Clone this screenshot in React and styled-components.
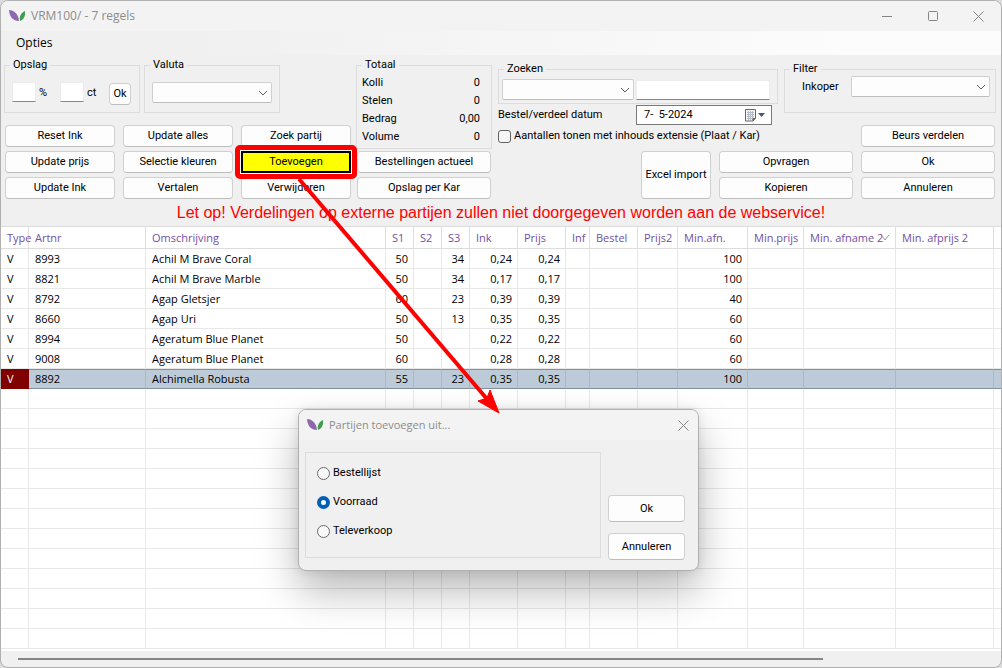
import React, { useState } from "react";
import styled, { createGlobalStyle, css } from "styled-components";

const uiFont = "Roboto, sans-serif";
const gridFont = '"Open Sans", "Noto Sans", sans-serif';

const GlobalStyle = createGlobalStyle`
  *, *::before, *::after { box-sizing: border-box; }
  body { margin: 0; background: #dcdcdc; }
  button, input, select { font: inherit; color: inherit; margin: 0; }
`;

const Window = styled.main`
  position: relative;
  display: flex;
  flex-direction: column;
  min-height: 100vh;
  border: 1px solid #b0b0b0;
  border-radius: 8px;
  overflow: hidden;
  background: #f0f0f0;
  color: #000;
  font: 11px/14px ${uiFont};
`;

const TitleBar = styled.header`
  display: flex;
  align-items: center;
  height: 30px;
  padding: 0 ${(p) => (p.$dialog ? "9px" : "17px")} 0 8px;
  background: #f3f3f3;
  color: #8c8c8c;
  font: ${(p) => (p.$dialog ? "11px" : "12px")}/16px "Open Sans", sans-serif;
`;

const Title = styled.h1`
  flex: 1;
  margin: 0 0 0 5px;
  font: inherit;
`;

const WindowControls = styled.div`
  display: flex;
  gap: 34px;
`;

const ControlButton = styled.button`
  display: flex;
  padding: 0;
  border: 0;
  background: none;
`;

const MenuBar = styled.nav`
  display: flex;
  align-items: center;
  height: 24px;
  padding-left: 15px;
  background: linear-gradient(90deg, #f0f0f0 20%, #fcfcfc 85%);
  font: 12px/16px "Open Sans", sans-serif;
`;

const MenuButton = styled.button`
  padding: 0;
  border: 0;
  background: none;
`;

const Toolbar = styled.section`
  display: flex;
  align-items: flex-end;
  padding: 3px 5px 0 3px;
`;

const LeftPanel = styled.div`
  width: 348px;
`;

const TotalsPanel = styled.div`
  width: 136px;
  margin: 0 6px 0 4px;
`;

const RightPanel = styled.div`
  flex: 1;
`;

const PanelRow = styled.div`
  display: flex;
  align-items: flex-start;
  justify-content: ${(p) => (p.$spread ? "space-between" : "flex-start")};
  gap: 4px;
`;

const GroupFrame = styled.fieldset`
  width: ${(p) => p.$width};
  height: ${(p) => p.$height};
  min-width: 0;
  margin: 0;
  padding: 0;
  border: 1px solid #dcdcdc;
`;

const Legend = styled.legend`
  margin-left: 5px;
  padding: 0 3px;
`;

const GroupBody = styled.div`
  display: flex;
  align-items: flex-start;
  padding: ${(p) => p.$pad};
`;

const SmallInput = styled.input`
  width: 24px;
  height: 20px;
  padding: 0 2px;
  border: 1px solid #ececec;
  border-bottom-color: #868686;
  background: #fff;
`;

const SearchInput = styled(SmallInput)`
  flex: 1;
  margin: 1px 0 0 2px;
`;

const Unit = styled.label`
  width: ${(p) => p.$width};
  padding: 4px 0 0 3px;
`;

const Button = styled.button`
  height: 22px;
  padding: 0;
  border: 1px solid #d0d0d0;
  border-bottom-color: #bdbdbd;
  border-radius: 4px;
  background: #fdfdfd;
  text-align: center;
  white-space: nowrap;
  ${(p) =>
    p.$highlight &&
    css`
      position: relative;
      z-index: 1;
      border: 2px solid #000;
      border-radius: 0;
      background: #ff0;
      &::after {
        content: "";
        position: absolute;
        inset: -8px;
        border: 5px solid #f00;
        border-radius: 5px;
        box-shadow: inset 0 0 0 1px #fff;
      }
    `}
`;

const SmallButton = styled(Button)`
  width: 22px;
  margin-top: 1px;
`;

const ButtonGrid = styled.div`
  display: grid;
  grid-template-columns: repeat(3, 1fr);
  gap: 4px 8px;
  padding: 12px 1px 0;
`;

const ButtonStack = styled.div`
  display: grid;
  gap: 4px;
  padding: 2px 1px 0;
`;

const Totals = styled.dl`
  display: grid;
  grid-template-columns: 1fr auto;
  flex: 1;
  margin: 0;
  line-height: 18px;
  dd { margin: 0; text-align: right; }
`;

const ComboBox = styled.span`
  position: relative;
  display: block;
  width: ${(p) => p.$width};
  height: 21px;
  select {
    width: 100%;
    height: 100%;
    appearance: none;
    border: 1px solid #d0d0d0;
    border-bottom-color: #bdbdbd;
    border-radius: 2px;
    background: #fdfdfd;
  }
  svg {
    position: absolute;
    right: 4px;
    top: 8px;
    pointer-events: none;
  }
`;

const DateRow = styled.div`
  display: flex;
  align-items: center;
  justify-content: space-between;
  width: 274px;
  height: 20px;
  margin-top: 1px;
`;

const DateField = styled.span`
  display: flex;
  align-items: center;
  width: 136px;
  height: 20px;
  padding-right: 5px;
  border: 1px solid #7a7a7a;
  background: #fff;
  input {
    flex: 1;
    min-width: 0;
    padding: 0 0 0 7px;
    border: 0;
    background: none;
  }
`;

const ActionGrid = styled.div`
  display: grid;
  grid-template-columns: 1fr 70px 134px 134px;
  grid-template-rows: repeat(3, 22px);
  gap: 4px 8px;
  padding-right: 1px;
`;

const ExcelButton = styled(Button)`
  grid-area: 2 / 2 / 4 / 3;
  height: auto;
`;

const GridButton = styled(Button)`
  grid-column: ${(p) => p.$col};
  grid-row: ${(p) => p.$row};
`;

const CheckLabel = styled.label`
  grid-area: 1 / 1 / 2 / 4;
  display: flex;
  align-items: center;
  gap: 3px;
  input {
    width: 13px;
    height: 13px;
    appearance: none;
    border: 1px solid #616161;
    border-radius: 3px;
    background: #f5f5f5;
  }
`;

const Notice = styled.p`
  margin: 0;
  padding: 4px 0 3px;
  color: #f00;
  font: 16px/20px "Liberation Sans", Arial, sans-serif;
  text-align: center;
`;

const TableArea = styled.div`
  flex: 1;
  overflow: hidden;
  background: #fff;
`;

const Table = styled.table`
  width: 100%;
  table-layout: fixed;
  border-spacing: 0;
  border-top: 1px solid #dcdcdc;
  font: 11px/16px ${gridFont};
`;

const HeadCell = styled.th`
  height: 22px;
  padding: 0 0 0 6px;
  border-right: 1px solid #e0e0e0;
  border-bottom: 1px solid #dcdcdc;
  color: #7350a4;
  font-weight: 400;
  text-align: left;
  white-space: nowrap;
  &:last-child { border-right: 0; }
  svg { margin-left: -2px; vertical-align: 1px; }
`;

const Row = styled.tr`
  ${(p) =>
    p.$selected &&
    css`
      background: #bdcbd9;
      td { border-color: #7f919f #a9b9c8 #7f919f; border-top: 1px solid #7f919f; }
      td:first-child { background: #800000; color: #fff; border-color: #800000; }
    `}
`;

const Cell = styled.td`
  height: 20px;
  padding: 0 5px 0 6px;
  border-right: 1px solid #e8e8e8;
  border-bottom: 1px solid #e8e8e8;
  text-align: ${(p) => (p.$numeric ? "right" : "left")};
  white-space: nowrap;
  &:last-child { border-right: 0; }
`;

const ScrollTrack = styled.div`
  height: 16px;
  padding: 7px 13px 0 17px;
`;

const ScrollThumb = styled.div`
  width: 83%;
  height: 2px;
  background: #868686;
`;

const Dialog = styled.section`
  position: absolute;
  left: 297px;
  top: 408px;
  width: 401px;
  border: 1px solid #b0b0b0;
  border-radius: 8px;
  overflow: hidden;
  background: #f0f0f0;
  box-shadow: 0 20px 40px rgba(0, 0, 0, 0.28), 0 0 10px rgba(0, 0, 0, 0.1);
`;

const DialogBody = styled.div`
  display: flex;
  align-items: flex-start;
  gap: 7px;
  padding: 12px 13px 10px 6px;
`;

const RadioGroup = styled.fieldset`
  display: flex;
  flex-direction: column;
  gap: 15px;
  flex: 1;
  height: 106px;
  margin: 0;
  padding: 13px 11px;
  border: 1px solid #dcdcdc;
`;

const RadioLabel = styled.label`
  display: flex;
  align-items: center;
  gap: 3px;
  input {
    width: 13px;
    height: 13px;
    appearance: none;
    border: 1px solid #6a6a6a;
    border-radius: 50%;
    background: #f8f8f8;
  }
  input:checked {
    border: 4px solid #0060b8;
    background: #fff;
  }
`;

const DialogActions = styled.div`
  display: flex;
  flex-direction: column;
  gap: 11px;
  width: 77px;
  padding-top: 43px;
`;

const DialogButton = styled(Button)`
  height: 27px;
`;

const Arrow = styled.svg`
  position: absolute;
  left: 294px;
  top: 172px;
  z-index: 2;
  pointer-events: none;
`;

const LeafLogo = () => (
  <svg width="17" height="14" viewBox="0 0 17 14" aria-hidden="true">
    <path d="M0 1C5 1 9.500 5 10 12C4 12 .5 8 0 1Z" fill="#8e68ae" />
    <path d="M16 2C16.500 7 15 10.500 11 12C10 7.500 12 4 16 2Z" fill="#3f9e4d" />
  </svg>
);

const Chevron = () => (
  <svg width="10" height="6" viewBox="0 0 10 6" fill="none" stroke="#606060" aria-hidden="true">
    <path d="M1 1L5 5L9 1" />
  </svg>
);

const CloseIcon = () => (
  <svg width="11" height="11" viewBox="0 0 11 11" fill="none" stroke="#858585" aria-hidden="true">
    <path d="M.5 .5L10.5 10.5M10.5 .5L.5 10.5" />
  </svg>
);

const CalendarIcon = () => (
  <svg width="21" height="13" viewBox="0 0 21 13" aria-hidden="true">
    <path d="M.5 .5H10.5V9L8 12H.5Z" fill="#f4f6f9" stroke="#6e6560" />
    <path d="M2 3.5H9M2 5.5H9M2 7.5H9M2 9.5H8M3.5 2V11M5.5 2V11M7.5 2V11" stroke="#b4bccb" fill="none" />
    <path d="M8 12V9.5H10.5" fill="#6e6560" stroke="#6e6560" />
    <path d="M13 4H20L16.500 8Z" fill="#42597f" />
  </svg>
);

const Group = ({ title, width, height, pad, children }) => (
  <GroupFrame $width={width} $height={height}>
    <Legend>{title}</Legend>
    <GroupBody $pad={pad}>{children}</GroupBody>
  </GroupFrame>
);

const Combo = ({ label, width, id }) => (
  <ComboBox $width={width}>
    <select id={id} aria-label={label} />
    <Chevron />
  </ComboBox>
);

const columns = [
  ["Type", 28], ["Artnr", 117], ["Omschrijving", 240], ["S1", 28, true], ["S2", 28, true],
  ["S3", 28, true], ["Ink", 48, true], ["Prijs", 48, true], ["Inf", 24], ["Bestel", 48],
  ["Prijs2", 40], ["Min.afn.", 70, true], ["Min.prijs", 56], ["Min. afname 2", 92],
  ["Min. afprijs 2", 98], ["", null],
];

const article = (nr, name, s1, s3, price, min) =>
  ["V", nr, name, s1, "", s3, price, price, "", "", "", min, "", "", "", ""];

const articles = [
  article("8993", "Achil M Brave Coral", "50", "34", "0,24", "100"),
  article("8821", "Achil M Brave Marble", "50", "34", "0,17", "100"),
  article("8792", "Agap Gletsjer", "60", "23", "0,39", "40"),
  article("8660", "Agap Uri", "50", "13", "0,35", "60"),
  article("8994", "Ageratum Blue Planet", "50", "", "0,22", "60"),
  article("9008", "Ageratum Blue Planet", "60", "", "0,28", "60"),
  article("8892", "Alchimella Robusta", "55", "23", "0,35", "100"),
];
const emptyRows = Array.from({ length: 13 }, () => columns.map(() => ""));
const rows = [...articles, ...emptyRows];

const totals = [["Kolli", "0"], ["Stelen", "0"], ["Bedrag", "0,00"], ["Volume", "0"]];
const commands = [
  "Reset Ink", "Update alles", "Zoek partij",
  "Update prijs", "Selectie kleuren", "Toevoegen",
  "Update Ink", "Vertalen", "Verwijderen",
];

function AddDialog() {
  const [source, setSource] = useState("Voorraad");
  return (
    <Dialog role="dialog" aria-label="Partijen toevoegen uit...">
      <TitleBar $dialog>
        <LeafLogo />
        <Title as="h2">Partijen toevoegen uit...</Title>
        <ControlButton aria-label="Sluiten"><CloseIcon /></ControlButton>
      </TitleBar>
      <DialogBody>
        <RadioGroup aria-label="Bron">
          {["Bestellijst", "Voorraad", "Televerkoop"].map((name) => (
            <RadioLabel key={name}>
              <input type="radio" name="source" checked={source === name} onChange={() => setSource(name)} />
              {name}
            </RadioLabel>
          ))}
        </RadioGroup>
        <DialogActions>
          <DialogButton>Ok</DialogButton>
          <DialogButton>Annuleren</DialogButton>
        </DialogActions>
      </DialogBody>
    </Dialog>
  );
}

export default function App() {
  return (
    <>
      <GlobalStyle />
      <Window>
        <TitleBar>
          <LeafLogo />
          <Title>VRM100/ - 7 regels</Title>
          <WindowControls>
            <ControlButton aria-label="Minimaliseren">
              <svg width="12" height="11" stroke="#858585"><path d="M1 5.5H11" /></svg>
            </ControlButton>
            <ControlButton aria-label="Maximaliseren">
              <svg width="12" height="11" stroke="#858585" fill="none"><rect x="1.500" y=".5" width="9" height="9" rx="1" /></svg>
            </ControlButton>
            <ControlButton aria-label="Sluiten"><CloseIcon /></ControlButton>
          </WindowControls>
        </TitleBar>
        <MenuBar><MenuButton>Opties</MenuButton></MenuBar>

        <Toolbar>
          <LeftPanel>
            <PanelRow>
              <Group title="Opslag" width="136px" height="55px" pad="10px 7px 0">
                <SmallInput id="percent" />
                <Unit htmlFor="percent" $width="24px">%</Unit>
                <SmallInput id="cents" />
                <Unit htmlFor="cents" $width="25px">ct</Unit>
                <SmallButton>Ok</SmallButton>
              </Group>
              <Group title="Valuta" width="136px" height="55px" pad="10px 7px 0">
                <Combo label="Valuta" width="120px" />
              </Group>
            </PanelRow>
            <ButtonGrid>
              {commands.map((name) => (
                <Button key={name} $highlight={name === "Toevoegen"}>{name}</Button>
              ))}
            </ButtonGrid>
          </LeftPanel>

          <TotalsPanel>
            <Group title="Totaal" width="100%" height="91px" pad="2px 11px 0 5px">
              <Totals>
                {totals.map(([name, value]) => (
                  <React.Fragment key={name}><dt>{name}</dt><dd>{value}</dd></React.Fragment>
                ))}
              </Totals>
            </Group>
            <ButtonStack>
              <Button>Bestellingen actueel</Button>
              <Button>Opslag per Kar</Button>
            </ButtonStack>
          </TotalsPanel>

          <RightPanel>
            <PanelRow $spread>
              <div>
                <Group title="Zoeken" width="280px" height="42px" pad="3px 7px 0 3px">
                  <Combo label="Zoekveld" width="132px" />
                  <SearchInput aria-label="Zoektekst" />
                </Group>
                <DateRow>
                  <label htmlFor="date">Bestel/verdeel datum</label>
                  <DateField>
                    <input id="date" defaultValue={"7-  5-2024"} />
                    <CalendarIcon />
                  </DateField>
                </DateRow>
              </div>
              <Group title="Filter" width="212px" height="51px" pad="0 5px 0 14px">
                <Unit htmlFor="buyer" $width="52px">Inkoper</Unit>
                <Combo id="buyer" width="139px" />
              </Group>
            </PanelRow>
            <ActionGrid>
              <CheckLabel>
                <input type="checkbox" />
                Aantallen tonen met inhouds extensie (Plaat / Kar)
              </CheckLabel>
              <GridButton $col={4} $row={1}>Beurs verdelen</GridButton>
              <ExcelButton>Excel import</ExcelButton>
              <GridButton $col={3} $row={2}>Opvragen</GridButton>
              <GridButton $col={4} $row={2}>Ok</GridButton>
              <GridButton $col={3} $row={3}>Kopieren</GridButton>
              <GridButton $col={4} $row={3}>Annuleren</GridButton>
            </ActionGrid>
          </RightPanel>
        </Toolbar>

        <Notice>Let op! Verdelingen op externe partijen zullen niet doorgegeven worden aan de webservice!</Notice>

        <TableArea>
          <Table>
            <colgroup>
              {columns.map(([name, width]) => <col key={name} width={width || undefined} />)}
            </colgroup>
            <thead>
              <tr>
                {columns.map(([name]) => (
                  <HeadCell key={name}>
                    {name}
                    {name === "Min. afname 2" && (
                      <svg width="9" height="6" fill="none" stroke="#999"><path d="M1 1L4 5L8 0" /></svg>
                    )}
                  </HeadCell>
                ))}
              </tr>
            </thead>
            <tbody>
              {rows.map((row, r) => (
                <Row key={r} $selected={r === articles.length - 1}>
                  {row.map((value, c) => <Cell key={c} $numeric={columns[c][2]}>{value}</Cell>)}
                </Row>
              ))}
            </tbody>
          </Table>
        </TableArea>
        <ScrollTrack><ScrollThumb /></ScrollTrack>

        <AddDialog />
        <Arrow width="210" height="246" viewBox="0 0 210 246" aria-hidden="true">
          <path d="M4 6L192 226" stroke="#f00" strokeWidth="4" />
          <path d="M204 240L183 228L192 225L195 217Z" fill="#f00" stroke="#f00" />
        </Arrow>
      </Window>
    </>
  );
}
